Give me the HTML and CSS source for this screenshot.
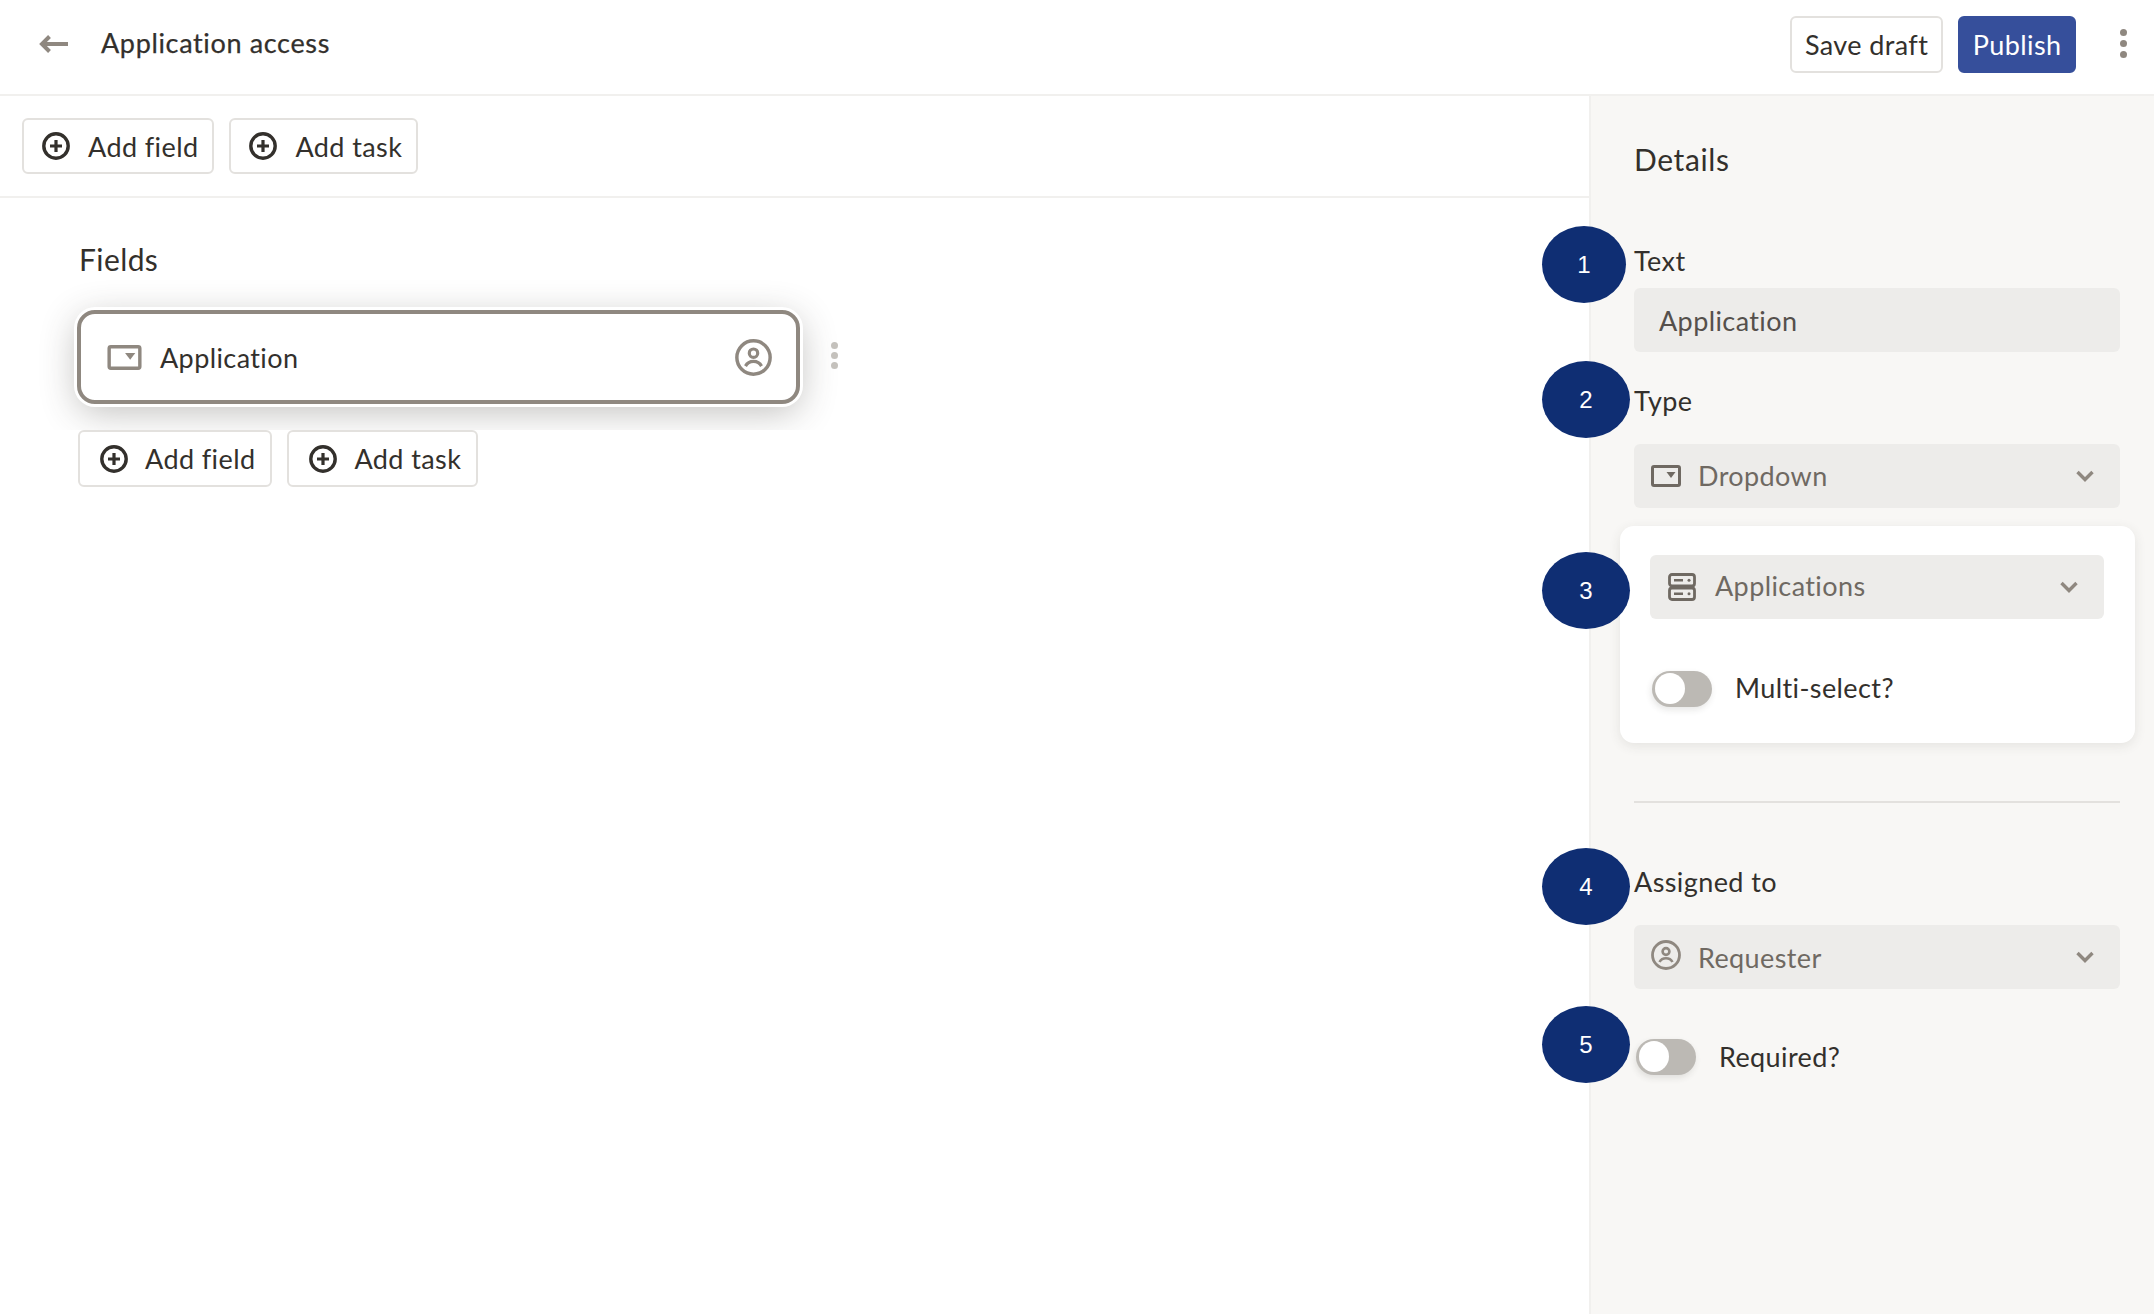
FILE: index.html
```html
<!DOCTYPE html>
<html lang="en">
<head>
<meta charset="utf-8">
<title>Application access</title>
<link rel="stylesheet" href="styles.css">
</head>
<body>
<svg class="defs" aria-hidden="true">
  <symbol id="i-plus" viewBox="0 0 28 28"><circle cx="14" cy="14" r="12.2" fill="none" stroke="currentColor" stroke-width="3.4"/><path d="M14 8v12M8 14h12" fill="none" stroke="currentColor" stroke-width="3.2"/></symbol>
  <symbol id="i-drop" viewBox="0 0 30 22"><rect x="1.5" y="1.5" width="27" height="19" rx="1.5" fill="none" stroke="currentColor" stroke-width="3"/><path d="M15.5 7h9l-4.500 6z" fill="currentColor"/></symbol>
  <symbol id="i-user" viewBox="0 0 30 30"><circle cx="15" cy="15" r="13.5" fill="none" stroke="currentColor" stroke-width="2.8"/><circle cx="15" cy="11.5" r="3.4" fill="none" stroke="currentColor" stroke-width="2.6"/><path d="M8.500 22c1.400-2.600 3.600-3.800 6.500-3.800s5.100 1.200 6.500 3.800" fill="none" stroke="currentColor" stroke-width="2.6"/></symbol>
  <symbol id="i-chev" viewBox="0 0 18 12"><path d="M1.500 2l7.500 7.500L16.500 2" fill="none" stroke="currentColor" stroke-width="3.400"/></symbol>
  <symbol id="i-server" viewBox="0 0 28 28"><rect x="1.500" y="1.500" width="25" height="11.500" rx="2.500" fill="none" stroke="currentColor" stroke-width="2.800"/><rect x="1.500" y="15" width="25" height="11.500" rx="2.500" fill="none" stroke="currentColor" stroke-width="2.800"/><path d="M6 7.200h9M6 20.800h9" stroke="currentColor" stroke-width="2.400"/><circle cx="21" cy="7.200" r="1.500" fill="currentColor"/><circle cx="21" cy="20.800" r="1.500" fill="currentColor"/></symbol>
</svg>

<header class="topbar">
  <svg class="back" viewBox="0 0 30 18" aria-hidden="true"><path d="M29 9H3.500M10.500 1.500L3 9l7.500 7.500" fill="none" stroke="currentColor" stroke-width="4"/></svg>
  <h1 class="title">Application access</h1>
  <div class="actions">
    <button class="btn">Save draft</button>
    <button class="btn btn-primary">Publish</button>
    <div class="kebab"><i></i><i></i><i></i></div>
  </div>
</header>

<div class="layout">
  <main class="canvas">
    <div class="toolbar">
      <button class="btn btn-add"><svg class="ic-plus"><use href="#i-plus"/></svg>Add field</button>
      <button class="btn btn-add"><svg class="ic-plus"><use href="#i-plus"/></svg>Add task</button>
    </div>
    <section class="fields">
      <h2 class="fields-title">Fields</h2>
      <div class="field-row">
        <div class="field-card">
          <svg class="ic-drop"><use href="#i-drop"/></svg>
          <span class="field-name">Application</span>
          <svg class="ic-user"><use href="#i-user"/></svg>
        </div>
        <div class="kebab kebab-light"><i></i><i></i><i></i></div>
      </div>
      <div class="add-row">
        <button class="btn btn-add"><svg class="ic-plus"><use href="#i-plus"/></svg>Add field</button>
        <button class="btn btn-add"><svg class="ic-plus"><use href="#i-plus"/></svg>Add task</button>
      </div>
    </section>
  </main>

  <aside class="panel">
    <h2 class="panel-title">Details</h2>
    <label class="label label-text">Text</label>
    <div class="input">Application</div>
    <label class="label label-type">Type</label>
    <div class="input select"><svg class="ic-drop"><use href="#i-drop"/></svg><span class="val">Dropdown</span><svg class="chev"><use href="#i-chev"/></svg></div>
    <div class="subcard">
      <div class="input select sub"><svg class="ic-server"><use href="#i-server"/></svg><span class="val">Applications</span><svg class="chev"><use href="#i-chev"/></svg></div>
      <div class="toggle-row"><span class="toggle"><span class="knob"></span></span><span class="toggle-label">Multi-select?</span></div>
    </div>
    <hr class="divider">
    <label class="label label-assign">Assigned to</label>
    <div class="input select assignee"><svg class="ic-user"><use href="#i-user"/></svg><span class="val">Requester</span><svg class="chev"><use href="#i-chev"/></svg></div>
    <div class="toggle-row required"><span class="toggle"><span class="knob"></span></span><span class="toggle-label">Required?</span></div>

    <span class="marker m1">1</span>
    <span class="marker m2">2</span>
    <span class="marker m3">3</span>
    <span class="marker m4">4</span>
    <span class="marker m5">5</span>
  </aside>
</div>
</body>
</html>
```
FILE: styles.css
```css
* { box-sizing: border-box; }
html, body { margin: 0; height: 100%; }
body {
  display: flex;
  flex-direction: column;
  height: 1314px;
  overflow: hidden;
  background: #fff;
  color: #33302c;
  font-family: "Lato", "Open Sans", sans-serif;
  font-size: 27px;
  letter-spacing: 0.4px;
}
.defs { display: none; }
button { font: inherit; color: inherit; letter-spacing: inherit; }

.topbar {
  flex: none;
  height: 96px;
  display: flex;
  align-items: center;
  padding: 0 27px 0 39px;
  border-bottom: 2px solid #f1f0ee;
}
.back { width: 30px; height: 18px; color: #8f8880; margin-top: -7px; }
.title { margin: -9px 0 0 32px; font-size: 27px; font-weight: 400; letter-spacing: 0.65px; -webkit-text-stroke: 0.25px #33302c; }
.actions { margin-left: auto; display: flex; align-items: center; gap: 15px; margin-top: -5px; }

.btn {
  height: 57px;
  padding: 0 13px;
  background: #fff;
  border: 2px solid #e3e1de;
  border-radius: 6px;
  display: inline-flex;
  align-items: center;
  white-space: nowrap;
}
.btn-primary { background: #364f9b; border-color: #364f9b; color: #fff; padding: 0 12.5px; }
.btn-add { padding: 0 14px 0 18px; gap: 18px; }

.kebab { display: flex; flex-direction: column; gap: 4px; margin-left: 29px; margin-top: -2px; }
.kebab i { display: block; width: 7px; height: 7px; border-radius: 50%; background: #8f8880; }
.kebab-light { margin: -3px 0 0 31px; gap: 3px; }
.kebab-light i { background: #c4c1bc; }

.layout { flex: 1; display: flex; min-height: 0; }
.canvas { flex: 1; min-width: 0; }
.toolbar {
  height: 102px;
  display: flex;
  gap: 15px;
  align-items: flex-start;
  padding: 22px 0 0 22px;
  border-bottom: 2px solid #f1f0ee;
}
.toolbar .btn { height: 56px; }
.ic-plus { width: 28px; height: 28px; flex: none; color: #33302c; }

.fields { padding: 0 0 0 78px; }
.fields-title { margin: 0; height: 112px; padding: 43px 0 0 1px; font-size: 30px; font-weight: 400; line-height: 36px; letter-spacing: 0.4px; }
.field-row { display: flex; align-items: center; padding-bottom: 26px; }
.field-card {
  width: 723px;
  height: 94px;
  margin-left: -1px;
  display: flex;
  align-items: center;
  padding: 0 24px 0 25px;
  background: #fff;
  border: 4px solid #8f8880;
  border-radius: 18px;
  box-shadow: 0 0 0 3px #fff, 0 8px 36px rgba(60, 55, 50, 0.32);
}
.ic-drop { width: 30px; height: 22px; flex: none; color: #6f6962; }
.field-card .ic-drop { width: 37px; height: 25px; color: #8f8880; }
.field-name { margin-left: 17px; }
.ic-user { width: 30px; height: 30px; flex: none; color: #8f8880; }
.field-card .ic-user { width: 37px; height: 37px; margin-left: auto; }

.add-row {
  position: relative;
  display: flex;
  gap: 15px;
  background: #fff;
  margin-left: -78px;
  padding-left: 78px;
}
.add-row .btn-add { padding: 0 15px 0 20px; gap: 17px; }

.panel {
  position: relative;
  flex: none;
  width: 565px;
  background: #f8f7f5;
  border-left: 2px solid #f1f0ee;
  padding: 0 34px 0 43px;
}
.panel-title { margin: 0; height: 116px; padding-top: 45px; font-size: 30px; font-weight: 400; line-height: 36px; letter-spacing: 0.6px; }
.label { display: block; line-height: 34px; }
.label-text { margin-top: 32px; margin-bottom: 10px; }
.label-type { margin-top: 32px; margin-bottom: 26px; }
.label-assign { margin-top: 62px; margin-bottom: 26px; }

.input {
  height: 64px;
  display: flex;
  align-items: center;
  padding: 0 25px;
  background: #edecea;
  border-radius: 6px;
  color: #55504c;
}
.select { padding: 0 26px 0 17px; color: #6f6962; }
.val { margin: -2px 0 0 17px; }
.assignee .val { margin-top: 0; }
.assignee .ic-user { margin-top: -4px; }
.chev { width: 18px; height: 12px; margin-left: auto; color: #8f8880; }
.ic-server { width: 28px; height: 28px; flex: none; color: #6f6962; }
.sub { padding-left: 18px; }
.sub .val { margin: -4px 0 0 19px; }

.subcard {
  margin: 18px -15px 0 -14px;
  padding: 29px 31px 0 30px;
  height: 217px;
  background: #fff;
  border-radius: 14px;
  box-shadow: 0 3px 12px rgba(60, 55, 50, 0.1);
}
.toggle-row { display: flex; align-items: center; }
.subcard .toggle-row { margin: 52px 0 0 2px; }
.subcard .toggle-label { margin-top: -4px; }
.required { margin: 50px 0 0 2px; }
.toggle {
  width: 60px;
  height: 36px;
  flex: none;
  padding: 2px 0 0 3px;
  border-radius: 18px;
  background: #bcb9b4;
  box-shadow: -1px 3px 6px rgba(60, 55, 50, 0.12);
}
.knob {
  display: block;
  width: 30px;
  height: 31px;
  border-radius: 50%;
  background: #fff;
}
.toggle-label { margin: -2px 0 0 23px; }

.divider { margin: 58px 0 0; border: 0; border-top: 2px solid #e3e1de; }

.marker {
  position: absolute;
  left: -49px;
  width: 88px;
  height: 77px;
  display: flex;
  align-items: center;
  justify-content: center;
  border-radius: 50%;
  background: #0f2e73;
  color: #fff;
  font-family: "Liberation Sans", Arial, sans-serif;
  font-size: 24px;
  letter-spacing: 0;
}
.m1 { top: 130px; width: 84px; }
.m2 { top: 265px; }
.m3 { top: 456px; }
.m4 { top: 752px; }
.m5 { top: 910px; }
```
